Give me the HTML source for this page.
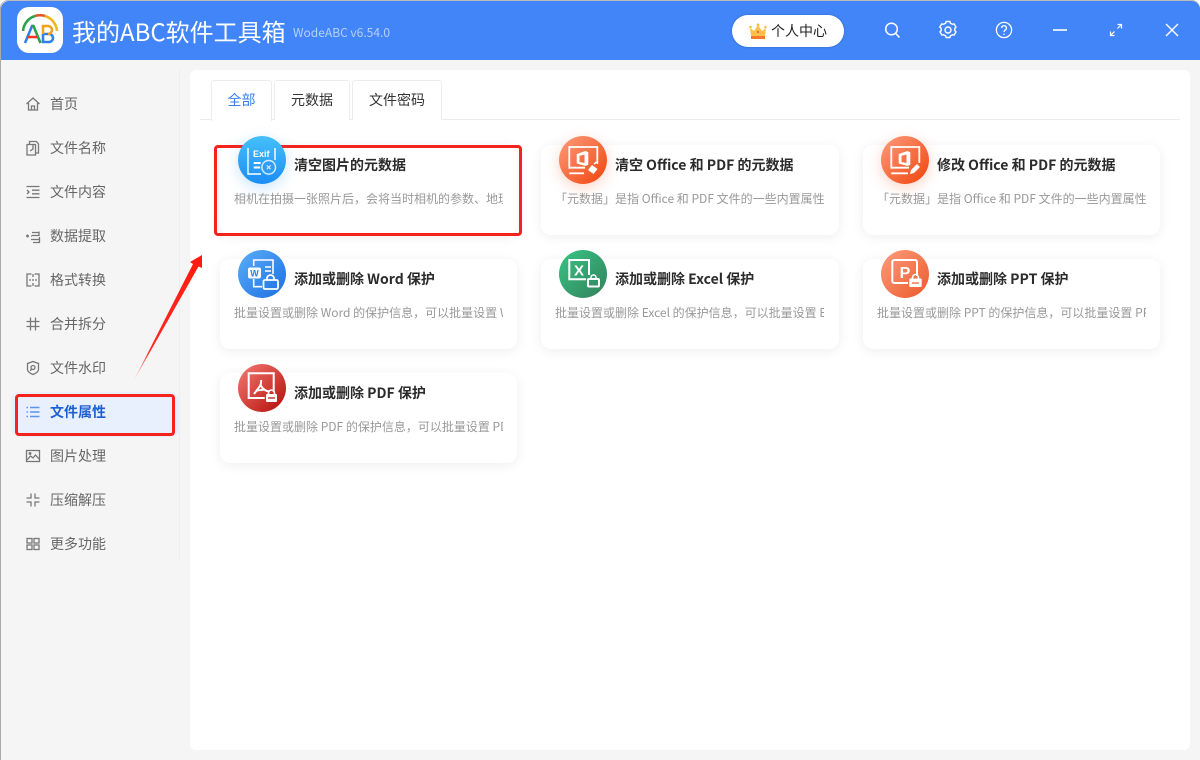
<!DOCTYPE html>
<html lang="zh">
<head>
<meta charset="utf-8">
<title>我的ABC软件工具箱</title>
<style>
*{box-sizing:border-box;margin:0;padding:0}
html,body{width:1200px;height:760px;overflow:hidden;background:#fff}
body{font-family:"Noto Sans CJK SC","Liberation Sans",sans-serif;position:relative}
.win{position:absolute;left:0;top:0;width:1200px;height:760px;background:#f5f5f5;border-left:1px solid #aaa;border-top:1px solid #bbb;border-radius:8px 8px 0 0;overflow:hidden}
.head{position:absolute;left:1px;top:1px;width:1199px;height:59px;background:#4285f9;border-radius:8px 8px 0 0}
.abs{position:absolute}
.t{position:absolute;white-space:nowrap}
.logo{position:absolute;left:17px;top:7px;width:46px;height:46px;background:#fff;border-radius:12px}
.apptitle{left:72px;top:14px;font-size:24px;line-height:34px;color:#fff}
.ver{left:293px;top:25px;font-size:12px;line-height:16px;color:#b6d0fc}
.vip{position:absolute;left:732px;top:15px;width:112px;height:32px;background:#fff;border-radius:16px;box-shadow:0 0 2px rgba(0,0,0,.25)}
.vip span{position:absolute;left:39px;top:6px;font-size:14px;line-height:20px;color:#222}
.main{position:absolute;left:190px;top:70px;width:1000px;height:680px;background:#fff;border-radius:6px}
.div{position:absolute;left:179px;top:70px;width:1px;height:490px;background:#eeeeee}
.nav{position:absolute;left:50px;font-size:14px;line-height:20px;color:#666;white-space:nowrap}
.nav.on{color:#1c5fd4;font-weight:bold}
.ni{position:absolute;left:25px;width:16px;height:16px;fill:none;stroke:#777;stroke-width:1.3}
.active{position:absolute;left:11px;top:392px;width:168px;height:45px;background:#e8f0fd;border-radius:8px}
.redbox{position:absolute;border:3px solid #f5231c;border-radius:4px}
.tab{position:absolute;top:80px;height:40px;border:1px solid #ececec;border-bottom:none;border-radius:3px 3px 0 0;font-size:14px;line-height:38px;text-align:center;color:#333;background:#fff}
.tabline{position:absolute;left:200px;top:119px;width:980px;height:1px;background:#ececec}
.card{position:absolute;width:297px;height:90px;background:#fff;border-radius:10px;box-shadow:0 2px 12px rgba(0,0,0,.07)}
.title{position:absolute;left:74px;top:10px;font-size:14px;line-height:20px;font-weight:bold;color:#2b2b2b;white-space:nowrap}
.desc{position:absolute;left:14px;top:44px;width:269px;height:20px;overflow:hidden;font-size:12px;line-height:20px;color:#999;white-space:nowrap}
.ic{position:absolute;width:48px;height:48px;border-radius:50%}
.ic svg{position:absolute;left:0;top:0;width:48px;height:48px;fill:none;stroke:#fff;stroke-width:2}
</style>
</head>
<body>
<div class="win"></div>
<div class="head"></div>

<div class="logo"></div>
<svg class="abs" style="left:17px;top:7px;width:46px;height:46px" viewBox="0 0 46 46" fill="none">
<path d="M6 24a17 17 0 0 1 12-15" stroke="#2ba24c" stroke-width="2.600"/>
<path d="M18 9a17 17 0 0 1 10 0" stroke="#e2552b" stroke-width="2.600"/>
<path d="M28 9a17 17 0 0 1 12 15" stroke="#f2b61c" stroke-width="2.600"/>
<path d="M8 36l7-17h1.500" stroke="#2f80ed" stroke-width="2.600"/>
<path d="M15 19h1.500l7 17" stroke="#2ba24c" stroke-width="2.600"/>
<path d="M10 30h10" stroke="#ee3a2c" stroke-width="2.600"/>
<path d="M26 27v8h6a4 4 0 0 0 0-8h-6" stroke="#2f80ed" stroke-width="2.600"/>
<path d="M26 27v-8h5a4 4 0 0 1 0 8" stroke="#f2a31c" stroke-width="2.600"/>
</svg>
<div class="t apptitle">我的ABC软件工具箱</div>
<div class="t ver">WodeABC v6.54.0</div>

<div class="vip"><span>个人中心</span>
<svg class="abs" style="left:17px;top:8px;width:18px;height:17px" viewBox="0 0 18 17"><path d="M1 5l4 3 4-6 4 6 4-3-1 8H2z" fill="#fbbf4b"/><circle cx="1.500" cy="4" r="1.300" fill="#fbbf4b"/><circle cx="9" cy="2" r="1.500" fill="#fbbf4b"/><circle cx="16.500" cy="4" r="1.300" fill="#fbbf4b"/><rect x="2" y="13" width="14" height="3" fill="#f4792b"/><circle cx="9" cy="9" r="1" fill="#e2562a"/></svg>
</div>

<svg class="abs" style="left:880px;top:20px;width:24px;height:24px" viewBox="0 0 24 24" fill="none" stroke="#fff" stroke-width="1.500"><circle cx="11.500" cy="9" r="5.800"/><path d="M15.500 13.200l4 4.300"/></svg>
<svg class="abs" style="left:936px;top:18px;width:24px;height:24px" viewBox="0 0 24 24" fill="none" stroke="#fff" stroke-width="1.400"><path d="M9.600 5.200l.5-1.700h3.800l.5 1.700 2 1.100 1.700-.4 1.900 3.200-1.200 1.300v2.200l1.200 1.300-1.900 3.200-1.700-.4-2 1.100-.5 1.700h-3.800l-.5-1.700-2-1.100-1.700.4-1.900-3.200 1.200-1.300v-2.200L3.800 9.100l1.900-3.200 1.700.4z"/><circle cx="12" cy="12" r="3"/></svg>
<svg class="abs" style="left:992px;top:18px;width:24px;height:24px" viewBox="0 0 24 24" fill="none" stroke="#fff" stroke-width="1.300"><circle cx="12" cy="12" r="7.600"/><path d="M9.600 10a2.400 2.400 0 1 1 3.600 2.100c-.8.500-1.200 1-1.200 1.900"/><path d="M12 15.600v1.300"/></svg>
<svg class="abs" style="left:1053px;top:26px;width:14px;height:8px" viewBox="0 0 14 8"><rect width="14" height="2" y="3" fill="#d8e6fd"/></svg>
<svg class="abs" style="left:1108px;top:22px;width:16px;height:16px" viewBox="0 0 16 16" fill="none" stroke="#fff" stroke-width="1.200"><path d="M2.500 13.500l4-4M2.500 9.500v4h4"/><path d="M13.500 2.500l-4 4M9.500 2.500h4v4"/></svg>
<svg class="abs" style="left:1164px;top:22px;width:16px;height:16px" viewBox="0 0 16 16" fill="none" stroke="#fff" stroke-width="1.400"><path d="M2 2l12 12M14 2L2 14"/></svg>

<div class="div"></div>
<div class="main"></div>

<!-- sidebar -->
<div class="active"></div>
<div class="redbox" style="left:15px;top:394px;width:160px;height:42px"></div>

<svg class="ni" style="top:96px" viewBox="0 0 16 16"><path d="M1.500 8L8 2l6.500 6M3.500 7v7h9V7M6.500 14v-4h3v4"/></svg>
<div class="nav" style="top:94px">首页</div>
<svg class="ni" style="top:140px" viewBox="0 0 16 16"><path d="M2 4.500h8.500V15H2zM4.500 4V1.500h7L13.500 4v9h-3M8 5v4l-3 2"/></svg>
<div class="nav" style="top:138px">文件名称</div>
<svg class="ni" style="top:184px" viewBox="0 0 16 16"><path d="M1.500 2.500h13M7 6.200h7.500M7 9.800h7.500M1.500 13.500h13M2 6l2 2-2 2"/></svg>
<div class="nav" style="top:182px">文件内容</div>
<svg class="ni" style="top:228px" viewBox="0 0 16 16"><path d="M7 4.500h7M14 3.500v4H7M7 8h-1M6 11.500h8.500M14.500 9v5.500H8"/><circle cx="2.500" cy="8" r=".8"/></svg>
<div class="nav" style="top:226px">数据提取</div>
<svg class="ni" style="top:272px" viewBox="0 0 16 16"><path d="M6.500 2H2v12h4.500M9.500 2H14v12H9.500M8 2v3M8 7v2M8 11v3M4 8h2M10 8h2"/></svg>
<div class="nav" style="top:270px">格式转换</div>
<svg class="ni" style="top:316px" viewBox="0 0 16 16"><path d="M5.500 1.500v13M10.500 1.500v13M1.500 5.500h13M1.500 10.500h13"/></svg>
<div class="nav" style="top:314px">合并拆分</div>
<svg class="ni" style="top:360px" viewBox="0 0 16 16"><path d="M8 1.500l5.500 2v6c0 2.500-3 4-5.500 5-2.500-1-5.500-2.500-5.500-5v-6z"/><circle cx="8" cy="7.500" r="2"/><path d="M6.200 9l-.7 2"/></svg>
<div class="nav" style="top:358px">文件水印</div>
<svg class="ni" style="top:404px;stroke:#5b93ee" viewBox="0 0 16 16"><path d="M5 3.500h9.500M5 8h9.500M5 12.500h9.500M1.500 3.500h1.500M1.500 8h1.500M1.500 12.500h1.500" stroke-width="1.600"/></svg>
<div class="nav on" style="top:402px">文件属性</div>
<svg class="ni" style="top:448px" viewBox="0 0 16 16"><rect x="1.500" y="2.500" width="13" height="11"/><path d="M2 12l3.500-4 2.500 2 2.500-3 3.500 4"/><circle cx="5" cy="5.500" r=".8"/></svg>
<div class="nav" style="top:446px">图片处理</div>
<svg class="ni" style="top:492px" viewBox="0 0 16 16"><path d="M6 1.500V6H1.500M10 1.500V6h4.500M6 14.500V10H1.500M10 14.500V10h4.500"/></svg>
<div class="nav" style="top:490px">压缩解压</div>
<svg class="ni" style="top:536px" viewBox="0 0 16 16"><rect x="2" y="2.500" width="5" height="4.500"/><rect x="9" y="2.500" width="5" height="4.500"/><rect x="2" y="9" width="5" height="4.500"/><rect x="9" y="9" width="5" height="4.500"/></svg>
<div class="nav" style="top:534px">更多功能</div>

<!-- tabs -->
<div class="tabline"></div>
<div class="tab" style="left:211px;width:61px;color:#3b7ff0;height:41px;z-index:2">全部</div>
<div class="tab" style="left:274px;width:76px">元数据</div>
<div class="tab" style="left:352px;width:90px">文件密码</div>

<!-- cards -->
<div class="card" style="left:220px;top:145px"><div class="title">清空图片的元数据</div><div class="desc">相机在拍摄一张照片后，会将当时相机的参数、地理位置等信息</div></div>
<div class="card" style="left:541px;top:145px;width:298px"><div class="title">清空 Office 和 PDF 的元数据</div><div class="desc">「元数据」是指 Office 和 PDF 文件的一些内置属性，例如标题</div></div>
<div class="card" style="left:863px;top:145px"><div class="title">修改 Office 和 PDF 的元数据</div><div class="desc">「元数据」是指 Office 和 PDF 文件的一些内置属性，例如标题</div></div>
<div class="card" style="left:220px;top:259px"><div class="title">添加或删除 Word 保护</div><div class="desc">批量设置或删除 Word 的保护信息，可以批量设置 Word 的密码</div></div>
<div class="card" style="left:541px;top:259px;width:298px"><div class="title">添加或删除 Excel 保护</div><div class="desc">批量设置或删除 Excel 的保护信息，可以批量设置 Excel 的密码</div></div>
<div class="card" style="left:863px;top:259px"><div class="title">添加或删除 PPT 保护</div><div class="desc">批量设置或删除 PPT 的保护信息，可以批量设置 PPT 的密码</div></div>
<div class="card" style="left:220px;top:373px"><div class="title">添加或删除 PDF 保护</div><div class="desc">批量设置或删除 PDF 的保护信息，可以批量设置 PDF 的密码</div></div>

<!-- red annotation (under the icon) -->
<div class="redbox" style="left:214px;top:145px;width:308px;height:91px"></div>
<svg class="abs" style="left:120px;top:240px;width:100px;height:170px" viewBox="0 0 100 170"><defs><linearGradient id="ar" x1="0" y1="1" x2="1" y2="0"><stop offset="0" stop-color="#ff2a20" stop-opacity=".1"/><stop offset=".25" stop-color="#ff2a20"/><stop offset="1" stop-color="#ff1a10"/></linearGradient></defs><path d="M13 142L73 24 70 22 82 15 82 28 78.500 26.500Z" fill="url(#ar)"/></svg>

<!-- icons -->
<div class="ic" style="left:238px;top:136px;background:linear-gradient(180deg,#45c0fb,#1b8df5);box-shadow:0 4px 14px rgba(40,150,245,.25)">
<svg viewBox="0 0 48 48"><path d="M10 12v26h13M37 12v12" stroke-width="1.400"/><path d="M15.700 27h7M15.700 31.500h6.500" stroke-width="2"/><circle cx="30.700" cy="31.300" r="6.800" stroke-width="1.500" stroke="#cfeafc" fill="#2f9df6"/><path d="M28.800 29.400l3.800 3.800M32.600 29.400l-3.800 3.800" stroke-width="1.200" stroke="#cfeafc"/>
<text x="15" y="21" font-size="9" font-weight="bold" fill="#fff" stroke="none" font-family="Liberation Sans">Exif</text></svg></div>

<div class="ic" style="left:559px;top:136px;background:linear-gradient(135deg,#fd9c7c,#f0440c);box-shadow:0 4px 14px rgba(240,90,40,.25)">
<svg viewBox="0 0 48 48"><path d="M26 31.700H10.300V11h28v17" stroke-width="1.800"/><path d="M10.300 37.300H25" stroke-width="1.800"/><path d="M17.700 18L26.500 15L29.300 16.200V28.800L26.500 30L17.700 27.500ZM20.500 19.700V26L25.500 27V18.500Z" fill="#fff" fill-rule="evenodd" stroke="none"/><path d="M29 34l4-5 5.500 4-4 5z" fill="#fff" stroke="none"/><path d="M35 28l2.500-2" stroke-width="1.500"/></svg></div>

<div class="ic" style="left:881px;top:136px;background:linear-gradient(135deg,#fd9c7c,#f0440c);box-shadow:0 4px 14px rgba(240,90,40,.25)">
<svg viewBox="0 0 48 48"><path d="M28 31.700H10.300V11h28v16" stroke-width="1.800"/><path d="M10.300 37.300H27" stroke-width="1.800"/><path d="M17.700 18L26.500 15L29.300 16.200V28.800L26.500 30L17.700 27.500ZM20.500 19.700V26L25.500 27V18.500Z" fill="#fff" fill-rule="evenodd" stroke="none"/><path d="M29 38l1-4 6-6 3 3-6 6z" fill="#fff" stroke="none"/></svg></div>

<div class="ic" style="left:238px;top:250px;background:linear-gradient(135deg,#5aaef8,#1c6fe0)">
<svg viewBox="0 0 48 48"><path d="M15.700 16v-6H35v14M15.700 29v7.700H24" stroke-width="1.600"/><rect x="10" y="17.500" width="13" height="11" rx="2" fill="#fff" stroke="none"/><path d="M27 17h6M27 21h6" stroke-width="1.600"/><rect x="25.500" y="30" width="14.500" height="9" rx="1.500" stroke-width="1.800"/><path d="M29 30v-1.500a3.500 3.500 0 0 1 7 0V30" stroke-width="1.800"/>
<text x="16.500" y="26.500" text-anchor="middle" font-size="9" font-weight="bold" fill="#2b7fe8" stroke="none" font-family="Liberation Sans">W</text></svg></div>

<div class="ic" style="left:559px;top:250px;background:linear-gradient(135deg,#36c583,#35805c)">
<svg viewBox="0 0 48 48"><path d="M27 29.300H10.300V10H30v15" stroke-width="2"/><rect x="29" y="29" width="11" height="7.500" rx="1" stroke-width="2"/><path d="M32 29v-1.500a2.500 2.500 0 0 1 5 0V29" stroke-width="1.600"/>
<text x="20" y="25.500" text-anchor="middle" font-size="15" font-weight="bold" fill="#fff" stroke="none" font-family="Liberation Sans">X</text></svg></div>

<div class="ic" style="left:881px;top:250px;background:linear-gradient(135deg,#fd9c7c,#ec5a2c)">
<svg viewBox="0 0 48 48"><path d="M27 33H13.300a2 2 0 0 1-2-2V12a2 2 0 0 1 2-2H34a2 2 0 0 1 2 2v14" stroke-width="2"/><rect x="28.300" y="28.500" width="12.400" height="8.500" rx="1" fill="#fff" stroke="none"/><path d="M31.500 28.500v-1a3 3 0 0 1 6 0v1" stroke-width="1.600"/><path d="M31 33h7" stroke="#f07a50" stroke-width="1.500"/>
<text x="24" y="28" text-anchor="middle" font-size="16" font-weight="bold" fill="#fff" stroke="none" font-family="Liberation Sans">P</text></svg></div>

<div class="ic" style="left:238px;top:364px;background:linear-gradient(135deg,#f57a72,#b30d08)">
<svg viewBox="0 0 48 48"><path d="M26.700 34H10.700V9.300h25V28" stroke-width="2"/><path d="M16 30l6-8q1.500-2.500 1-6M22.500 21q3 6 9 6.500M19 26.500l8-1" stroke-width="2"/><rect x="28" y="30" width="11" height="8" rx="1" fill="#fff" stroke="none"/><path d="M30.500 30v-1a3 3 0 0 1 6 0v1" stroke-width="1.600"/><path d="M30 34h7" stroke="#c93a33" stroke-width="1.500"/></svg></div>
</body>
</html>
